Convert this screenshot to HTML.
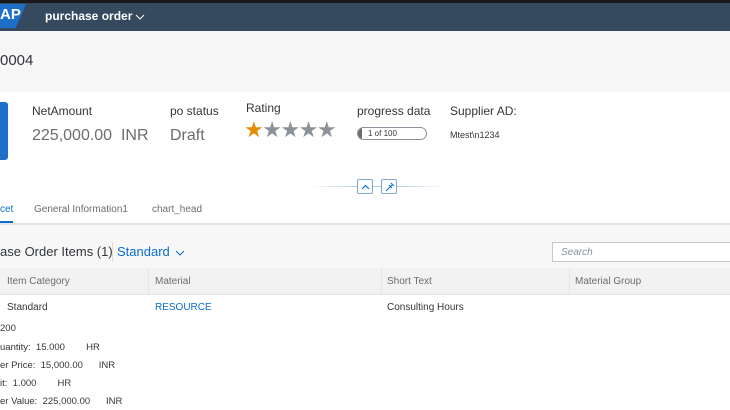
<!DOCTYPE html>
<html><head><style>
*{margin:0;padding:0;box-sizing:border-box}
body{width:730px;height:410px;overflow:hidden;font-family:"Liberation Sans",Arial,sans-serif;background:#fff;position:relative;color:#32363a}
.a{position:absolute;white-space:nowrap}
</style></head><body>
<div class="a" style="left:0;top:0;width:730px;height:3px;background:#1a1a1a"></div>
<div class="a" style="left:0;top:3px;width:730px;height:28px;background:#354a5f"></div>
<div class="a" style="left:0;top:4px;width:26px;height:24px;background:#1e6fc9;clip-path:polygon(0 0,100% 0,60% 100%,0 100%)"></div>
<div class="a" style="left:0;top:6px;color:#fff;font-weight:bold;font-size:15px;">AP</div>
<div class="a" style="left:45px;top:9px;color:#fff;font-weight:bold;font-size:12px;">purchase order</div>
<svg class="a" style="left:135px;top:14px" width="10" height="6"><path d="M1 1L5 5L9 1" fill="none" stroke="#fff" stroke-width="1"/></svg>
<div class="a" style="left:0;top:31px;width:730px;height:61px;background:#f7f7f7"></div>
<div class="a" style="left:0;top:52px;font-size:15px;color:#32363a">0004</div>
<div class="a" style="left:0;top:102px;width:8px;height:58px;background:#1e6fc9;border-radius:0 3px 3px 0"></div>
<div class="a" style="left:32px;top:104px;font-size:12px">NetAmount</div>
<div class="a" style="left:32px;top:127px;font-size:16px;color:#6a6d70">225,000.00&nbsp; INR</div>
<div class="a" style="left:170px;top:104px;font-size:12px">po status</div>
<div class="a" style="left:170px;top:127px;font-size:16px;color:#6a6d70">Draft</div>
<div class="a" style="left:246px;top:101px;font-size:12px">Rating</div>
<div class="a" style="left:244px;top:117px;font-size:22px;letter-spacing:-1.5px;color:#8c9299"><span style="color:#e78c07">★</span>★★★★</div>
<div class="a" style="left:357px;top:104px;font-size:12px">progress data</div>
<div class="a" style="left:357px;top:127px;width:70px;height:13px;border:1px solid #89919a;border-radius:7px;overflow:hidden"><div style="position:absolute;left:0;top:0;width:4px;height:13px;background:#6a6d70"></div><div style="position:absolute;left:10px;top:1px;font-size:8px">1 of 100</div></div>
<div class="a" style="left:450px;top:104px;font-size:12px">Supplier AD:</div>
<div class="a" style="left:450px;top:130px;font-size:9px">Mtest\n1234</div>
<div class="a" style="left:310px;top:186px;width:135px;height:1px;background:linear-gradient(90deg,#fff,#b8cde6,#b8cde6,#fff)"></div>
<div class="a" style="left:357px;top:179px;width:16px;height:15px;border:1px solid #7fa6d4;border-radius:2px;background:#fff"><svg style="position:absolute;left:3px;top:4px" width="9" height="6"><path d="M1 5L4.5 1.5L8 5" fill="none" stroke="#0a6ed1" stroke-width="1.2"/></svg></div>
<div class="a" style="left:381px;top:179px;width:16px;height:15px;border:1px solid #7fa6d4;border-radius:2px;background:#fff"><svg style="position:absolute;left:3px;top:2px" width="10" height="10"><path d="M6 1L9 4M7.5 2.5L5 5M4 3L7 6M5.5 4.5L1 9" fill="none" stroke="#0a6ed1" stroke-width="1"/></svg></div>
<div class="a" style="left:0;top:204px;font-size:10px;color:#0a6ed1">cet</div>
<div class="a" style="left:0;top:221px;width:13px;height:2px;background:#0a6ed1"></div>
<div class="a" style="left:34px;top:204px;font-size:10px;color:#6a6d70">General Information1</div>
<div class="a" style="left:152px;top:204px;font-size:10px;color:#6a6d70">chart_head</div>
<div class="a" style="left:0;top:223px;width:730px;height:2px;background:#e5e5e5"></div>
<div class="a" style="left:0;top:225px;width:730px;height:43px;background:#f7f7f7"></div>
<div class="a" style="left:0;top:244px;font-size:13px">ase Order Items (1)</div>
<div class="a" style="left:112px;top:242px;width:1px;height:20px;background:#ddd"></div>
<div class="a" style="left:117px;top:244px;font-size:13px;color:#0a6ed1">Standard</div>
<svg class="a" style="left:175px;top:250px" width="10" height="6"><path d="M1 1L5 5L9 1" fill="none" stroke="#0a6ed1" stroke-width="1"/></svg>
<div class="a" style="left:552px;top:242px;width:180px;height:20px;border:1px solid #c4c7ca;background:#fff;font-size:10px;font-style:italic;color:#8c9299;padding:4px 8px">Search</div>
<div class="a" style="left:0;top:268px;width:730px;height:27px;background:#f2f2f2;border-bottom:1px solid #e5e5e5"></div>
<div class="a" style="left:148px;top:268px;width:1px;height:27px;background:#e5e5e5"></div>
<div class="a" style="left:381px;top:268px;width:1px;height:27px;background:#e5e5e5"></div>
<div class="a" style="left:569px;top:268px;width:1px;height:27px;background:#e5e5e5"></div>
<div class="a" style="left:7px;top:276px;font-size:10px;color:#6a6d70">Item Category</div>
<div class="a" style="left:155px;top:276px;font-size:10px;color:#6a6d70">Material</div>
<div class="a" style="left:387px;top:276px;font-size:10px;color:#6a6d70">Short Text</div>
<div class="a" style="left:575px;top:276px;font-size:10px;color:#6a6d70">Material Group</div>
<div class="a" style="left:7px;top:302px;font-size:10px">Standard</div>
<div class="a" style="left:155px;top:302px;font-size:10px;color:#0a6ed1">RESOURCE</div>
<div class="a" style="left:387px;top:302px;font-size:10px">Consulting Hours</div>
<div class="a" style="left:0;top:323px;font-size:9.5px">200</div>
<div class="a" style="left:0;top:342px;font-size:9.5px">uantity:&nbsp; 15.000 &nbsp; &nbsp; &nbsp; &nbsp;HR</div>
<div class="a" style="left:0;top:360px;font-size:9.5px">er Price:&nbsp; 15,000.00 &nbsp; &nbsp; &nbsp;INR</div>
<div class="a" style="left:0;top:378px;font-size:9.5px">it:&nbsp; 1.000 &nbsp; &nbsp; &nbsp; &nbsp;HR</div>
<div class="a" style="left:0;top:396px;font-size:9.5px">er Value:&nbsp; 225,000.00 &nbsp; &nbsp; &nbsp;INR</div>
</body></html>
